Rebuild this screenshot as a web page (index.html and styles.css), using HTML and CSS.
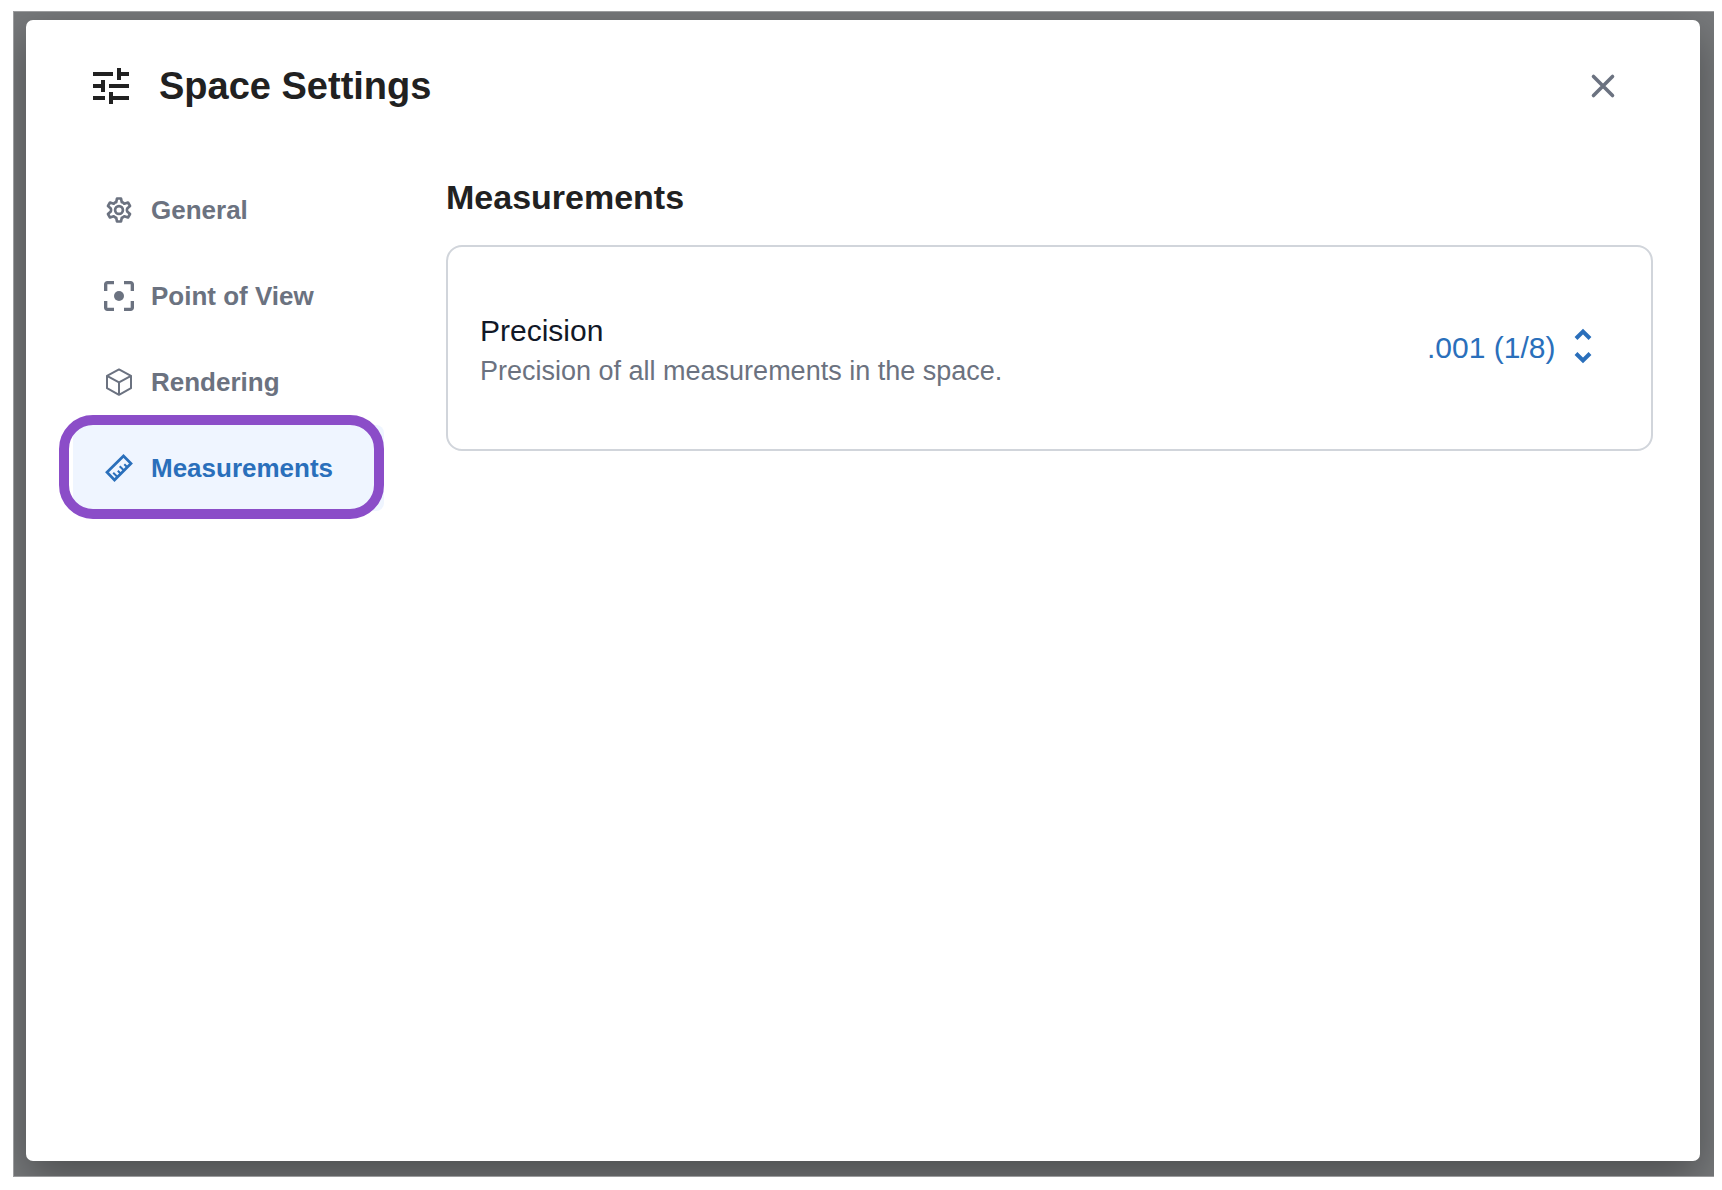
FILE: index.html
```html
<!DOCTYPE html>
<html lang="en">

<head>
    <meta charset="utf-8">
    <title>Space Settings</title>
    <link rel="stylesheet" href="styles.css">
</head>

<body>

    <div class="backdrop">
        <div class="modal" role="dialog" aria-labelledby="modal-title">
            <header class="modal-header">
                <svg class="title-icon" viewBox="0 0 24 24" fill="currentColor" aria-hidden="true">
                    <path d="M3 17v2h6v-2H3zM3 5v2h10V5H3zm10 16v-2h8v-2h-8v-2h-2v6h2zM7 9v2H3v2h4v2h2V9H7zm14 4v-2H11v2h10zm-6-4h2V7h4V5h-4V3h-2v6z" />
                </svg>
                <h1 id="modal-title">Space Settings</h1>
                <button class="close-button" type="button" aria-label="Close">
                    <svg viewBox="0 0 48 48" fill="none" stroke="currentColor" stroke-width="3.6" stroke-linecap="round">
                        <path d="M14.5 14.5l19 19M33.5 14.5l-19 19" />
                    </svg>
                </button>
            </header>

            <div class="modal-body">
                <nav class="sidebar">
                    <a class="nav-item" href="#general">
                        <svg class="nav-icon" viewBox="-20 -20 40 40" fill="none" stroke="currentColor" stroke-width="2.7" stroke-linejoin="round" aria-hidden="true">
                            <path d="M-2.8-7.8L-2-11.5H2L2.8-7.8Q4-7.6 5.3-6.3L9-7.5L11-4L8.2-1.5Q7.6 0 8.2 1.5L11 4L9 7.5L5.3 6.3Q4 7.6 2.8 7.8L2 11.5H-2L-2.8 7.8Q-4 7.6-5.3 6.3L-9 7.5L-11 4L-8.2 1.5Q-7.6 0-8.2-1.5L-11-4L-9-7.5L-5.3-6.3Q-4-7.6-2.8-7.8z" />
                            <circle r="3.9" />
                        </svg>
                        General
                    </a>
                    <a class="nav-item" href="#point-of-view">
                        <svg class="nav-icon" viewBox="0 0 24 24" fill="currentColor" aria-hidden="true">
                            <path d="M5 15H3v4c0 1.1.9 2 2 2h4v-2H5v-4zM5 5h4V3H5c-1.1 0-2 .9-2 2v4h2V5zm14-2h-4v2h4v4h2V5c0-1.1-.9-2-2-2zm0 16h-4v2h4c1.1 0 2-.9 2-2v-4h-2v4z" />
                            <circle cx="12" cy="12" r="3" />
                        </svg>
                        Point of View
                    </a>
                    <a class="nav-item" href="#rendering">
                        <svg class="nav-icon" viewBox="-20 -20 40 40" fill="none" stroke="currentColor" stroke-width="2" stroke-linejoin="round" aria-hidden="true">
                            <path d="M0-12.6L12-6.2V6.2L0 12.8L-12 6.2V-6.2zM-12-6.2L0 .4L12-6.2M0 .4V12.8" />
                        </svg>
                        Rendering
                    </a>
                    <a class="nav-item active" href="#measurements" aria-current="page">
                        <svg class="nav-icon" viewBox="-20 -20 40 40" fill="none" stroke="currentColor" stroke-width="2.7" aria-hidden="true">
                            <path d="M-12 4.3L4.5-12L12-4.5L-4.5 12z" />
                            <path stroke-width="2" d="M-1.5 9l-4.3-4.3M1.8 5.7l-3-3M5 2.5L.7-1.8M8.3-.8l-3-3" />
                        </svg>
                        Measurements
                    </a>
                </nav>

                <main class="content">
                    <h2>Measurements</h2>
                    <div class="card">
                        <div class="setting-text">
                            <label class="setting-name" for="precision">Precision</label>
                            <p class="setting-description">Precision of all measurements in the space.</p>
                        </div>
                        <div class="select">
                            <select id="precision">
                                <option>.1</option>
                                <option>.01 (1/4)</option>
                                <option selected>.001 (1/8)</option>
                            </select>
                            <svg class="select-arrows" viewBox="0 0 18 36" fill="none" stroke="currentColor" stroke-width="4" aria-hidden="true">
                                <path d="M2 10.500L9 3.500L16 10.500M2 25.500L9 32.500L16 25.500" />
                            </svg>
                        </div>
                    </div>
                </main>
            </div>
        </div>
    </div>

</body>

</html>
```
FILE: styles.css
```css
* {
    box-sizing: border-box;
}

body {
    display: flex;
    min-height: 100vh;
    margin: 0;
    padding: 11px 8px 13px 13px;
    background-color: #ffffff;
    color: #212121;
    font-family: "Liberation Sans", Arial, sans-serif;
}

h1,
h2,
p {
    margin: 0;
}

.backdrop {
    display: flex;
    flex: 1;
    padding: 8px 14px 15px 12px;
    overflow: hidden;
    border: 1px solid #9b9c9e;
    border-right: none;
    background-color: #77797b;
}

.modal {
    flex: 1;
    border-radius: 7px;
    background-color: #ffffff;
    box-shadow: 0 16px 44px rgba(0, 0, 0, 0.36);
}

/* Title bar */
.modal-header {
    display: flex;
    align-items: center;
    gap: 24px;
    height: 132px;
    padding: 0 73px 0 61px;
}

.title-icon {
    width: 48px;
    height: 48px;
}

h1 {
    font-size: 38px;
    line-height: 48px;
}

.close-button {
    width: 48px;
    height: 48px;
    margin-left: auto;
    padding: 0;
    border: none;
    background: none;
    color: #6b7280;
    cursor: pointer;
}

.close-button svg {
    display: block;
}

.modal-body {
    display: flex;
    gap: 62px;
    padding: 15px 47px 48px;
}

/* Sidebar */
.sidebar {
    flex: 0 0 311px;
}

.nav-item {
    position: relative;
    display: flex;
    align-items: center;
    gap: 12px;
    height: 86px;
    padding: 0 26px;
    border-radius: 8px;
    color: #6b7280;
    font-size: 26px;
    font-weight: bold;
    text-decoration: none;
}

.nav-icon {
    width: 40px;
    height: 40px;
}

.nav-item.active {
    background-color: #eff5ff;
    color: #2a6fbb;
}

/* Ring drawn over the selected item */
.nav-item.active::after {
    content: "";
    position: absolute;
    top: -10px;
    right: 0;
    bottom: -8px;
    left: -14px;
    border: 10px solid #8b4dc8;
    border-radius: 34px;
}

/* Settings */
.content {
    flex: 1;
}

h2 {
    margin: 10px 0 28px;
    font-size: 34px;
    line-height: 40px;
}

.card {
    display: flex;
    align-items: center;
    justify-content: space-between;
    min-height: 206px;
    padding: 32px 59px 32px 32px;
    border: 2px solid #d1d5db;
    border-radius: 16px;
}

.setting-text {
    padding-top: 6px;
}

.setting-name {
    display: block;
    color: #111827;
    font-size: 30px;
    line-height: 40px;
}

.setting-description {
    color: #6b7280;
    font-size: 27px;
    line-height: 40px;
}

.select {
    position: relative;
    color: #2a6fbb;
}

.select select {
    appearance: none;
    padding: 0 36px 0 0;
    border: none;
    background: none;
    color: inherit;
    font-family: inherit;
    font-size: 30px;
    line-height: 40px;
    cursor: pointer;
}

.select-arrows {
    position: absolute;
    top: 0;
    right: 0;
    width: 18px;
    height: 36px;
    pointer-events: none;
}
```
